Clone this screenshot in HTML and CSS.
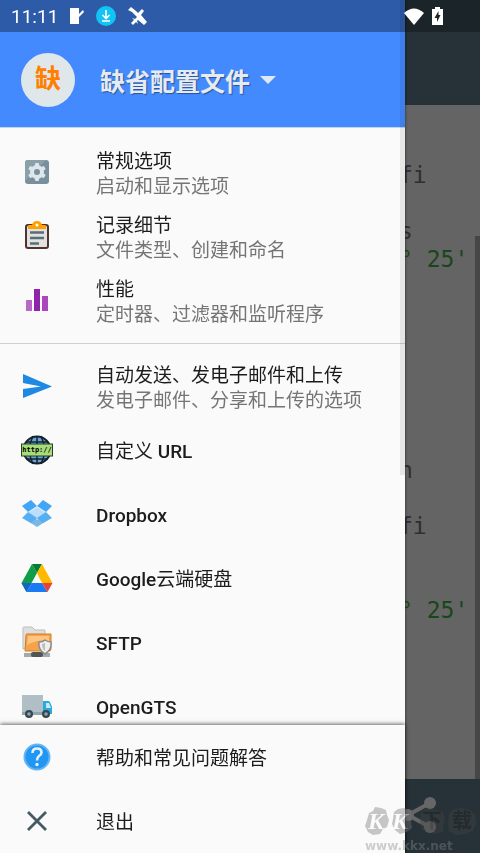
FILE: index.html
```
<!DOCTYPE html>
<html lang="zh-CN">

<head>
  <meta charset="UTF-8" />
  <meta name="viewport" content="width=device-width, initial-scale=1.0" />
  <title>GPS Logger</title>
  <link rel="stylesheet" href="styles.css">
</head>

<body>
  <!-- log view behind the menu -->
  <div class="app">
    <div class="app-status"></div>
    <div class="toolbar"></div>
    <main class="log">
      <div class="log-text">
        <div class="entry">
          <p>fi</p>
          <p class="gap">s</p>
          <p class="coord">° 25'</p>
        </div>
        <div class="entry">
          <p>n</p>
          <p class="gap">fi</p>
          <p class="coord low">° 25'</p>
        </div>
      </div>
      <div class="log-scroll"></div>
    </main>
    <footer class="bottom-bar">
      <button class="share" aria-label="分享">
        <svg width="36" height="40" viewBox="0 0 36 40">
          <path d="M29 7L7 19l22 12" fill="none" stroke="#fff" stroke-width="4" />
          <circle cx="29" cy="7" r="6" fill="#fff" />
          <circle cx="7" cy="19" r="6" fill="#fff" />
          <circle cx="29" cy="31" r="6" fill="#fff" />
        </svg>
      </button>
    </footer>
  </div>
  <div class="scrim"></div>

  <nav class="drawer">
    <div class="drawer-status"></div>
    <header class="profile">
      <span class="avatar">缺</span>
      <button class="profile-name">缺省配置文件
        <svg width="16" height="8" viewBox="0 0 16 8"><path d="M0 0h16L8 8z" fill="#dfe8f5" /></svg>
      </button>
    </header>

    <div class="list">
      <div class="group">
        <button class="item">
          <svg class="icon" viewBox="0 0 32 32">
            <rect x="4" y="4" width="24" height="24" rx="3" fill="#78909c" />
            <path d="M4 25V7a3 3 0 0 1 3-3h18z" fill="#8ca0aa" />
            <g fill="#dce6eb">
              <circle cx="16" cy="16" r="7" />
              <rect x="14" y="7" width="4" height="18" rx="1" />
              <rect x="14" y="7" width="4" height="18" rx="1" transform="rotate(60 16 16)" />
              <rect x="14" y="7" width="4" height="18" rx="1" transform="rotate(120 16 16)" />
            </g>
            <circle cx="16" cy="16" r="3" fill="#78909c" />
          </svg>
          <span class="text"><span class="title">常规选项</span><span class="desc">启动和显示选项</span></span>
        </button>
        <button class="item">
          <svg class="icon" viewBox="0 0 32 32">
            <rect x="4" y="4" width="24" height="25" rx="3" fill="#4e342e" />
            <rect x="6" y="6" width="20" height="21" rx="1" fill="#e4e0e0" />
            <path d="M7 9V6q0-1 1-1h3q1-4 5-4t5 4h3q1 0 1 1v3z" fill="#ffa000" />
            <circle cx="16" cy="5" r="1.5" fill="#fff" />
            <path d="M9 12.500h14M9 18h14M9 23.500h9" stroke="#546e7a" stroke-width="2.500" />
          </svg>
          <span class="text"><span class="title">记录细节</span><span class="desc">文件类型、创建和命名</span></span>
        </button>
        <button class="item">
          <svg class="icon" viewBox="0 0 32 32">
            <path d="M5 16h6v11H5z" fill="#ba68c8" />
            <path d="M13 5h6v22h-6z" fill="#8e24aa" />
            <path d="M21 12h6v15h-6z" fill="#ab47bc" />
          </svg>
          <span class="text"><span class="title">性能</span><span class="desc">定时器、过滤器和监听程序</span></span>
        </button>
      </div>

      <div class="group">
        <button class="item">
          <svg class="icon" viewBox="0 0 32 32">
            <path d="M2 4l29 12.500L2 28v-9l18-2.500L2 13z" fill="#1e88e5" />
          </svg>
          <span class="text"><span class="title">自动发送、发电子邮件和上传</span><span class="desc">发电子邮件、分享和上传的选项</span></span>
        </button>
        <button class="item">
          <svg class="icon" viewBox="0 0 32 32">
            <circle cx="16" cy="16" r="13.500" fill="#64a5dc" stroke="#17212b" stroke-width="2" />
            <path d="M16 2v28M5 8h22M5 25h22M12 2Q5 16 12 30M20 2q7 14 0 28" fill="none" stroke="#17212b" stroke-width="1.500" />
            <rect x="0.500" y="10" width="31" height="12" fill="#a8dc78" stroke="#27402b" />
            <text class="http" x="16" y="18" text-anchor="middle">http://</text>
          </svg>
          <span class="text"><span class="title">自定义 <b>URL</b></span></span>
        </button>
        <button class="item">
          <svg class="icon" viewBox="0 0 32 32">
            <path d="M5 22l11 7 11-7v-5H5z" fill="#78b8e8" />
            <path d="M16 9l10 6.500-10 6.500-10-6.500z" fill="#bbdefb" />
            <path d="M10 2L1 8l6 6 9-6zM22 2l9 6-6 6-9-6z" fill="#42a5f5" />
            <path d="M7 14l-6 6 9 5 6-5zM25 14l6 6-9 5-6-5z" fill="#56aff0" />
          </svg>
          <span class="text"><span class="title"><b>Dropbox</b></span></span>
        </button>
        <button class="item">
          <svg class="icon" viewBox="0 0 32 32">
            <path d="M11 2L0.500 21l5 9L16 11z" fill="#0f9d46" />
            <path d="M11 2h10l-5 9z" fill="#087a32" />
            <path d="M21 2l10.500 19H21L16 11z" fill="#ffba00" />
            <path d="M0.500 21H11l-5.500 9z" fill="#1565c8" />
            <path d="M11 21h10l5.500 9h-21z" fill="#1a7af5" />
            <path d="M21 21h10.500l-5 9z" fill="#ea4335" />
          </svg>
          <span class="text"><span class="title"><b>Google</b>云端硬盘</span></span>
        </button>
        <button class="item">
          <svg class="icon" viewBox="0 0 32 32">
            <path d="M2 23V2q0-1 1-1h8l3 3h10v9z" fill="#dedede" stroke="#bdbdbd" />
            <path d="M5 9q0-1 1-1h24v15q0 2-2 2H4z" fill="#f5a34a" stroke="#d07d22" />
            <path d="M7 10h21v5Q16 13 6 19z" fill="#ffc580" />
            <path d="M3 28h26M3 30h26" stroke="#8a8f8d" stroke-width="1.500" />
            <rect x="10" y="26" width="12" height="5" rx="2" fill="#4f5654" />
            <path d="M18 16q4 0 6-2 3 2 6 2 1 8-6 12-7-4-6-12z" fill="#eee" stroke="#8b8b8b" stroke-width="1.500" />
            <path d="M24 17v8q-3-2-3-7z" fill="#bdbdbd" />
          </svg>
          <span class="text"><span class="title"><b>SFTP</b></span></span>
        </button>
        <button class="item">
          <svg class="icon" viewBox="0 0 32 32">
            <path d="M1 5h21v19H1z" fill="#b0bec5" />
            <path d="M1 22h21v3H1z" fill="#90a4ae" />
            <path d="M22 11h5q1 0 2 1l2 5v7H22z" fill="#29a9dc" />
            <path d="M25 13h3l2 5h-5z" fill="#c6eafa" />
            <circle cx="8" cy="24" r="4" fill="#37474f" />
            <circle cx="8" cy="24" r="1.800" fill="#90a4ae" />
            <circle cx="25" cy="24" r="4" fill="#37474f" />
            <circle cx="25" cy="24" r="1.800" fill="#90a4ae" />
          </svg>
          <span class="text"><span class="title"><b>OpenGTS</b></span></span>
        </button>
      </div>
    </div>

    <div class="sticky">
      <button class="item">
        <svg class="icon" viewBox="0 0 32 32">
          <circle cx="16" cy="16" r="12.500" fill="#2196f3" stroke="#64b5f6" stroke-width="2" />
          <path d="M11.500 12q0-4.500 4.500-4.500t4.500 4q0 2-2.500 3.500-2 1.500-2 4.500" fill="none" stroke="#e3f2fd" stroke-width="2.600" />
          <circle cx="16" cy="23.500" r="1.700" fill="#e3f2fd" />
        </svg>
        <span class="text"><span class="title">帮助和常见问题解答</span></span>
      </button>
      <button class="item">
        <svg class="icon" viewBox="0 0 32 32">
          <path d="M7 7l18 18M25 7L7 25" stroke="#455a64" stroke-width="2.800" />
        </svg>
        <span class="text"><span class="title">退出</span></span>
      </button>
    </div>
    <div class="drawer-scroll"></div>
  </nav>

  <!-- system status icons, on top of everything -->
  <div class="status">
    <span class="clock">11:11</span>
    <svg width="14" height="18" viewBox="0 0 14 18">
      <path d="M0 1h9v6l4-4 1 2-5 5v7H0z" fill="#fff" />
    </svg>
    <svg width="20" height="20" viewBox="0 0 20 20">
      <circle cx="10" cy="10" r="10" fill="#12c4f4" />
      <path d="M10 4v8M6.500 9l3.500 3.500L13.500 9M6 15h8" fill="none" stroke="#fff" stroke-width="1.600" />
    </svg>
    <svg width="19" height="19" viewBox="0 0 19 19">
      <path d="M0 3l3-3 5 4 2 2 4-4 2 2-3 4 6 7-3 3-6-5-1 1 1 3-2-2-3 3-2-2 3-3-2-2 3 1 2-2-5-5z" fill="#fff" />
    </svg>
    <svg class="wifi" width="20" height="17" viewBox="0 0 20 17">
      <path d="M0 5q10-9 20 0L10 17z" fill="#fff" />
    </svg>
    <svg width="11" height="18" viewBox="0 0 11 18">
      <path d="M3 0h5v2h3v16H0V2h3z" fill="#fff" />
      <path d="M6.500 4L2.500 11h2.500v4l3.500-7H6.500z" fill="#1c2428" />
    </svg>
  </div>

  <div class="watermark">
    <svg width="112" height="34" viewBox="0 0 112 34">
      <path d="M4 8l4-2 2-4 6 1 5 2 1 5 2 5-2 7-4 2-3 5-7 1-5-3-3-6 2-6z" fill="#777" />
      <path d="M29 7l4-3 6-1 6 2 2 6-1 6 1 6-5 4-7 2-5-4-3-6 1-5z" fill="#777" />
      <path d="M56 7l6-4 8 2 8 1 2 8-2 7 1 5-8 3-8-1-6-3-2-7z" fill="#444" />
      <path d="M84 8l5-4 8-1 8 2 5 5 1 8-3 8-8 3-9 1-7-4-1-8z" fill="#444" />
      <text class="mark" x="3" y="24">K</text>
      <text class="mark" x="27" y="24">K</text>
      <text class="mark dark" x="57" y="23">下</text>
      <text class="mark dark" x="87" y="23">载</text>
    </svg>
    <span class="site">www.kkx.net</span>
  </div>
</body>

</html>
```
FILE: styles.css
```
body {
  margin: 0;
  height: 100vh;
  overflow: hidden;
  font-family: Roboto, "Noto Sans CJK SC", sans-serif;
}

button {
  border: none;
  background: none;
  padding: 0;
  font: inherit;
  text-align: left;
  cursor: pointer;
}

p {
  margin: 0;
}

/* log view */
.app {
  display: flex;
  flex-direction: column;
  height: 100%;
  background-color: #fafafa;
}

.app-status {
  height: 32px;
  background-color: #455a64;
}

.toolbar {
  height: 73px;
  background-color: #607d8b;
}

.log {
  flex: 1;
  display: flex;
  justify-content: flex-end;
  min-height: 0;
}

.log-text {
  width: 76px;
  padding-top: 56px;
  font-family: "DejaVu Sans Mono", monospace;
  font-size: 23px;
  line-height: 28px;
  color: #757575;
  white-space: nowrap;
}

.entry + .entry {
  margin-top: 183px;
}

.gap {
  margin-top: 28px;
}

.coord {
  color: #43b047;
}

.low {
  margin-top: 56px;
}

.log-scroll {
  width: 5px;
  margin-top: 131px;
  background-color: #b0b0b0;
}

.bottom-bar {
  display: flex;
  justify-content: flex-end;
  height: 74px;
  padding-right: 43px;
  background-color: #607d8b;
}

.share {
  display: flex;
  align-items: center;
}

.scrim {
  position: fixed;
  inset: 0;
  background-color: rgba(0, 0, 0, 0.6);
}

/* navigation drawer */
.drawer {
  position: fixed;
  top: 0;
  bottom: 0;
  left: 0;
  right: 75px;
  display: flex;
  flex-direction: column;
  background-color: #fafafa;
  box-shadow: 0 0 3px rgba(0, 0, 0, 0.6);
}

.drawer-status {
  height: 32px;
  background-color: #2d5ba8;
}

.profile {
  display: flex;
  align-items: center;
  gap: 25px;
  height: 95px;
  padding-left: 21px;
  background-color: #448aff;
  border-bottom: 1px solid #c3d3ee;
}

.avatar {
  width: 54px;
  height: 54px;
  border-radius: 50%;
  background-color: #dfe7ea;
  color: #ff7f00;
  font-size: 26px;
  font-weight: 700;
  line-height: 52px;
  text-align: center;
}

.profile-name {
  display: flex;
  align-items: center;
  gap: 10px;
  color: #e6ebf2;
  font-size: 25px;
  font-weight: 700;
  text-shadow: 1px 1px 1px rgba(0, 0, 0, 0.4);
}

.list {
  flex: 1;
  min-height: 0;
  overflow: hidden;
}

.group {
  padding: 12px 0 11px;
}

.group + .group {
  padding-top: 10px;
  border-top: 1px solid #d0d0d0;
}

.item {
  display: flex;
  align-items: center;
  width: 100%;
  height: 64px;
  padding-left: 21px;
  gap: 43px;
}

.icon {
  width: 32px;
  height: 32px;
}

.text {
  display: flex;
  flex-direction: column;
  padding-top: 3px;
  font-size: 19px;
  line-height: 25px;
}

.title {
  color: #1c1c1c;
}

.title b {
  font-weight: 500;
}

.desc {
  color: #757575;
}

.http {
  font: bold 7px "DejaVu Sans Mono", monospace;
}

.sticky {
  box-shadow: 0 -1px 4px rgba(0, 0, 0, 0.6);
}

.drawer-scroll {
  position: absolute;
  top: 0;
  right: 0;
  width: 5px;
  height: 475px;
  background-color: rgba(0, 0, 0, 0.08);
}

/* status bar */
.status {
  position: fixed;
  top: 0;
  left: 0;
  right: 0;
  display: flex;
  align-items: center;
  gap: 12px;
  height: 32px;
  padding: 0 37px 0 11px;
  color: #fff;
}

.clock {
  font-size: 19px;
}

.wifi {
  margin-left: auto;
  margin-right: -4px;
}

.watermark {
  position: fixed;
  right: 3px;
  bottom: 0;
  display: flex;
  flex-direction: column;
  width: 112px;
  opacity: 0.4;
}

.mark {
  font: italic bold 24px "Liberation Serif", serif;
  fill: #fff;
}

.dark {
  font: bold 20px "Noto Sans CJK SC", sans-serif;
  fill: #222;
}

.site {
  font: bold 12px/14px "DejaVu Sans", sans-serif;
  color: #888;
}
```
